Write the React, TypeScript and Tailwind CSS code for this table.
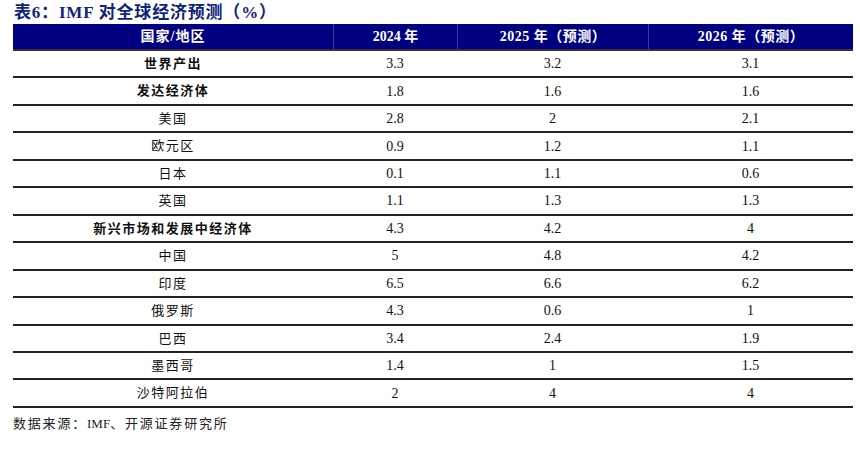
const rows: { name: string; v: [string, string, string]; bold?: boolean }[] = [
  { name: "世界产出", v: ["3.3", "3.2", "3.1"], bold: true },
  { name: "发达经济体", v: ["1.8", "1.6", "1.6"], bold: true },
  { name: "美国", v: ["2.8", "2", "2.1"] },
  { name: "欧元区", v: ["0.9", "1.2", "1.1"] },
  { name: "日本", v: ["0.1", "1.1", "0.6"] },
  { name: "英国", v: ["1.1", "1.3", "1.3"] },
  { name: "新兴市场和发展中经济体", v: ["4.3", "4.2", "4"], bold: true },
  { name: "中国", v: ["5", "4.8", "4.2"] },
  { name: "印度", v: ["6.5", "6.6", "6.2"] },
  { name: "俄罗斯", v: ["4.3", "0.6", "1"] },
  { name: "巴西", v: ["3.4", "2.4", "1.9"] },
  { name: "墨西哥", v: ["1.4", "1", "1.5"] },
  { name: "沙特阿拉伯", v: ["2", "4", "4"] },
];

const serif = "font-['Liberation_Serif','Noto_Sans_CJK_SC',serif]";

export default function App() {
  return (
    <div className={`h-[449px] w-[860px] bg-white px-[13px] text-[#111] ${serif}`}>
      <h1 className="flex h-[24px] items-center pl-[1px] text-[17px] font-bold leading-none tracking-[0.8px] text-[#10237a]">
        表6：IMF 对全球经济预测（%）
      </h1>
      <div className="w-[840px]">
        <div className="grid h-[27px] grid-cols-[320px_124px_191px_205px] border-b-2 border-[#333] bg-[#000080] text-[14px] font-bold text-white">
          <div className="flex items-center justify-center tracking-[1px]">国家/地区</div>
          <div className="flex items-center justify-center border-l border-[#3c3c9c]">2024 年</div>
          <div className="flex items-center justify-center border-l border-[#3c3c9c] tracking-[0.5px]">
            2025 年（预测）
          </div>
          <div className="flex items-center justify-center border-l border-[#3c3c9c] tracking-[0.5px]">
            2026 年（预测）
          </div>
        </div>
        {rows.map((r) => (
          <div
            key={r.name}
            className="grid h-[27.46px] grid-cols-[320px_124px_191px_205px] border-b-2 border-[#222] text-[14px]"
          >
            <div
              className={`flex items-center justify-center text-[13px] tracking-[1.5px] ${r.bold ? "font-bold" : ""}`}
            >
              {r.name}
            </div>
            {r.v.map((x, i) => (
              <div key={i} className="flex items-center justify-center">
                {x}
              </div>
            ))}
          </div>
        ))}
      </div>
      <p className="mt-[6px] text-[13px] tracking-[1.8px] text-[#222]">
        数据来源：<span className="tracking-normal">IMF</span>、开源证券研究所
      </p>
    </div>
  );
}
